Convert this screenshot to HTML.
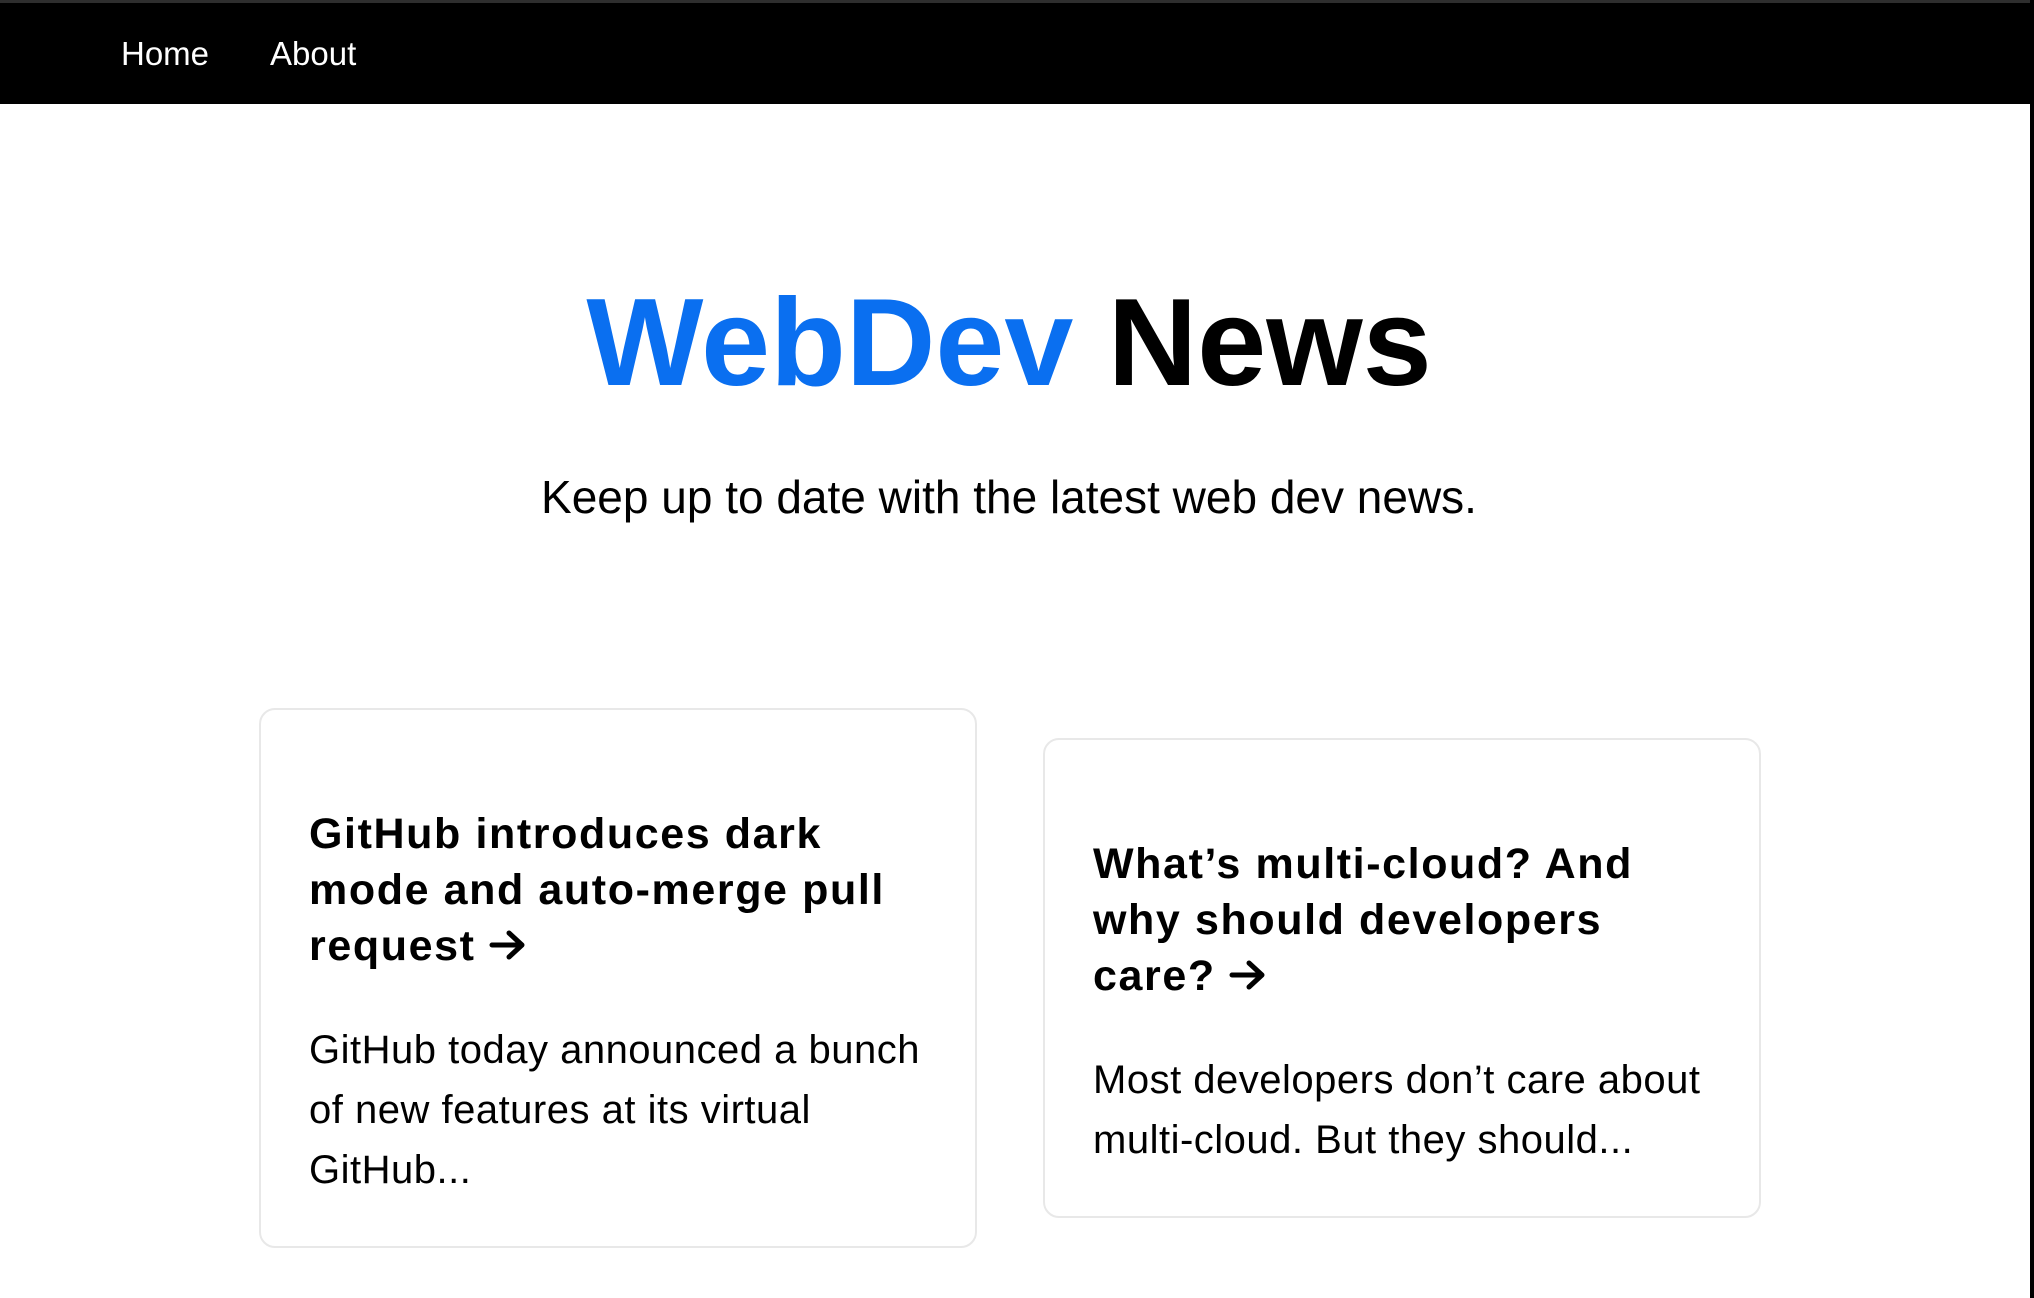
<!DOCTYPE html>
<html><head><meta charset="utf-8"><style>
*{margin:0;padding:0;box-sizing:border-box}
body{width:2034px;height:1298px;background:#fff;position:relative;overflow:hidden;font-family:"Liberation Sans",Arial,sans-serif;color:#000}
.top{position:absolute;left:0;top:0;width:2034px;height:3px;background:#2e2e2e}
nav{position:absolute;left:0;top:3px;width:2030px;height:101px;background:#000}
nav a{position:absolute;top:51px;line-height:0;color:#fff;font-size:33px;text-decoration:none}
.rl{position:absolute;right:0;top:0;width:4px;height:1298px;background:#000}
h1{position:absolute;left:-6px;width:2030px;top:281px;text-align:center;font-size:124px;line-height:124px;font-weight:700;letter-spacing:0}
h1 span{color:#0a6ff0}
.sub{position:absolute;left:-6px;width:2030px;top:470px;text-align:center;font-size:46px;line-height:54px}
.card{position:absolute;width:718px;border:2px solid #e8e8e8;border-radius:16px;padding:96px 48px 46px 48px}
.card h2{font-size:43px;line-height:56px;font-weight:700;letter-spacing:1.6px;white-space:nowrap}
.card h2 svg{vertical-align:-2px;margin-left:12px}
.card p{margin-top:46px;font-size:40px;line-height:60px;letter-spacing:0.5px;white-space:nowrap}
</style></head><body>
<div class="top"></div>
<nav><a style="left:121px">Home</a><a style="left:270px">About</a></nav>
<div class="rl"></div>
<h1><span>WebDev</span> News</h1>
<div class="sub">Keep up to date with the latest web dev news.</div>
<div class="card" style="left:259px;top:708px;height:540px">
<h2>GitHub introduces dark<br>mode and auto-merge pull<br>request<svg width="40" height="34" viewBox="0 0 40 34"><path d="M4 17H34M21 5L34 17L21 29" fill="none" stroke="#000" stroke-width="5" stroke-linecap="round" stroke-linejoin="round"/></svg></h2>
<p>GitHub today announced a bunch<br>of new features at its virtual<br>GitHub...</p>
</div>
<div class="card" style="left:1043px;top:738px;height:480px">
<h2>What’s multi-cloud? And<br>why should developers<br>care?<svg width="40" height="34" viewBox="0 0 40 34"><path d="M4 17H34M21 5L34 17L21 29" fill="none" stroke="#000" stroke-width="5" stroke-linecap="round" stroke-linejoin="round"/></svg></h2>
<p>Most developers don’t care about<br>multi-cloud. But they should...</p>
</div>
</body></html>
